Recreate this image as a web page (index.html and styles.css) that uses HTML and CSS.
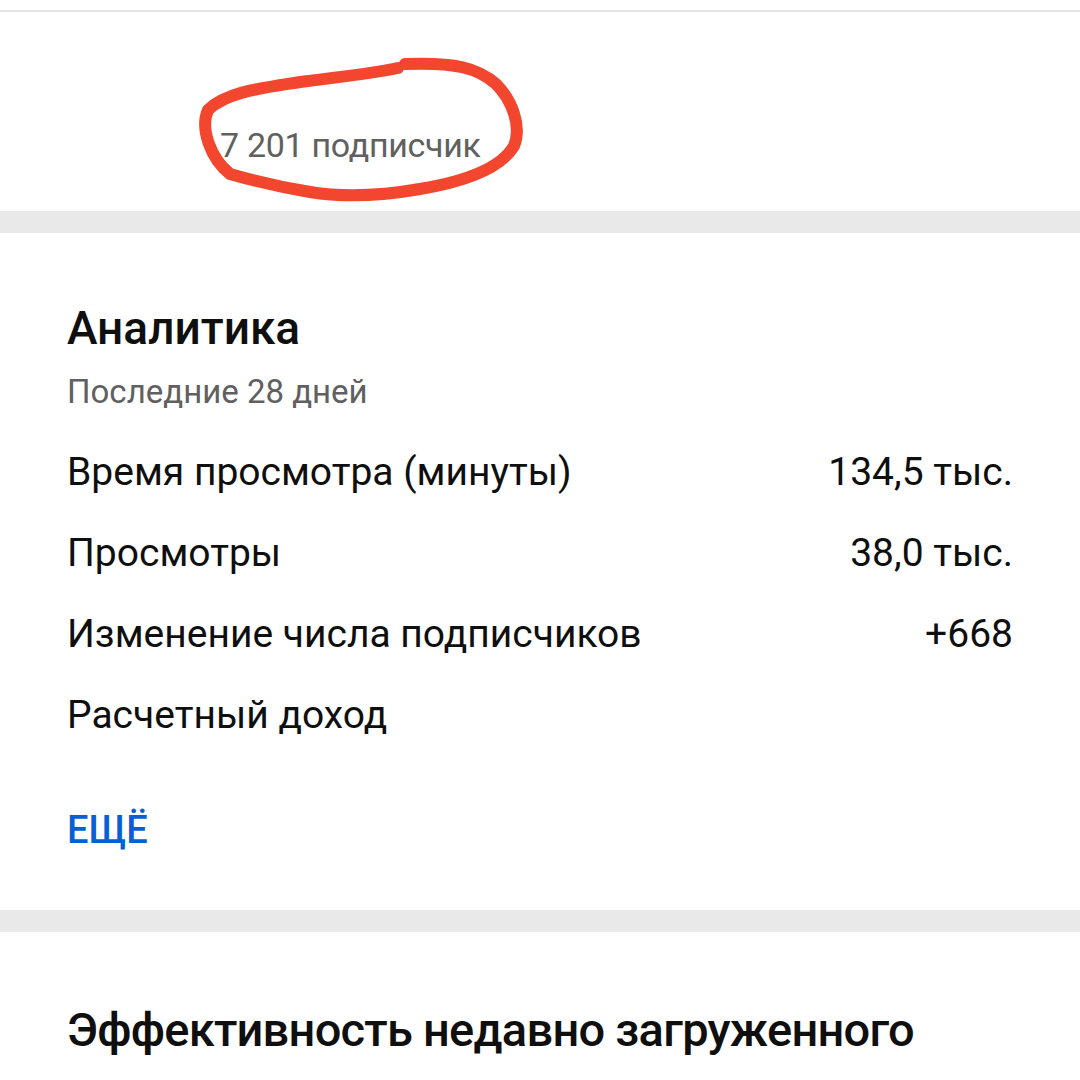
FILE: index.html
```html
<!DOCTYPE html>
<html lang="ru">
<head>
<meta charset="utf-8">
<link rel="stylesheet" href="styles.css">
</head>
<body>
<div class="topline"></div>
<section class="channel">
  <div class="subs">7 201 подписчик</div>
  <svg class="scribble" width="340" height="150" viewBox="195 55 340 150">
    <path d="M398 68 C380 72 350 76 300 82 C262 88 226 92 208 110 C200 128 210 158 230 174 C258 182 285 188 310 192 C340 197 380 196 420 189 C462 182 500 170 514 146 C522 126 512 100 496 84 C478 68 455 62 405 64" fill="none" stroke="#f2462f" stroke-width="12" stroke-linecap="round" stroke-linejoin="round"/>
  </svg>
</section>
<div class="band"></div>
<section class="card">
  <h2 class="title">Аналитика</h2>
  <div class="sub">Последние 28 дней</div>
  <div class="rows">
    <div class="row"><span>Время просмотра (минуты)</span><span>134,5 тыс.</span></div>
    <div class="row"><span>Просмотры</span><span>38,0 тыс.</span></div>
    <div class="row"><span>Изменение числа подписчиков</span><span>+668</span></div>
    <div class="row"><span>Расчетный доход</span><span></span></div>
  </div>
  <div class="more">ЕЩЁ</div>
</section>
<div class="band"></div>
<section class="card2">
  <h2 class="title2">Эффективность недавно загруженного видео</h2>
</section>
</body>
</html>
```
FILE: styles.css
```css
html, body {
  margin: 0;
  padding: 0;
  background: #fff;
  font-family: Roboto, "Liberation Sans", sans-serif;
  color: #0f0f0f;
  overflow: hidden;
}
.topline {
  height: 2px;
  margin-top: 10px;
  background: #e3e3e3;
}
.channel {
  position: relative;
  height: 199px;
}
.subs {
  position: absolute;
  left: 220px;
  top: 113px;
  font-size: 34px;
  line-height: 40px;
  color: #606060;
  letter-spacing: -0.3px;
}
.scribble {
  position: absolute;
  left: 195px;
  top: 43px;
}
.band {
  height: 22px;
  background: #e9e9e9;
}
.card {
  padding: 69px 67px 0 67px;
  height: 677px;
  box-sizing: border-box;
}
.title {
  margin: 0;
  font-size: 46px;
  font-weight: 500;
  line-height: 52px;
}
.sub {
  margin-top: 18px;
  font-size: 33px;
  color: #606060;
  line-height: 40px;
}
.rows {
  margin-top: 20px;
  display: flex;
  flex-direction: column;
}
.row {
  display: flex;
  justify-content: space-between;
  font-size: 39px;
  line-height: 81px;
}
.more {
  margin-top: 52px;
  font-size: 38px;
  line-height: 44px;
  font-weight: 500;
  color: #065fd4;
}
.card2 {
  padding: 68px 67px 0 67px;
}
.title2 {
  margin: 0;
  font-size: 47px;
  font-weight: 500;
  line-height: 60px;
  letter-spacing: -0.75px;
}
```
